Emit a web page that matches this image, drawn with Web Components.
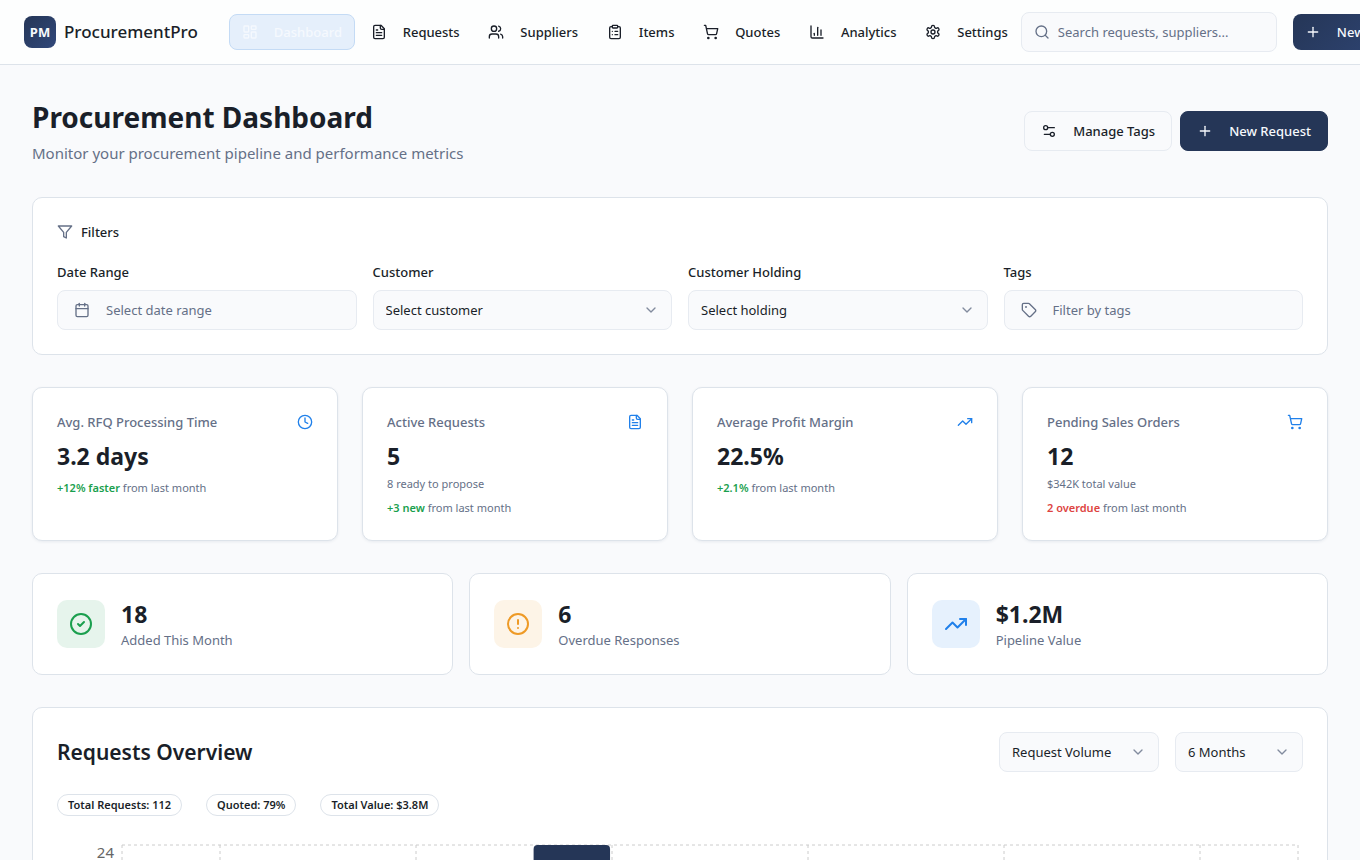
<!DOCTYPE html>
<html lang="en">
<head>
<meta charset="utf-8">
<meta name="viewport" content="width=device-width, initial-scale=1">
<title>ProcurementPro</title>
<style>
  :root {
    --bg: #f9fafc;
    --card: #ffffff;
    --text: #1a1f29;
    --muted: #657087;
    --border: #dde3ea;
    --field: #f9fafc;
    --field-border: #e7ebf1;
    --primary: #253657;
    --primary-light: #31487a;
    --accent: #2080ea;
    --success: #1a9f4e;
    --warning: #ee9a26;
    --danger: #dd4441;
    --radius: 10px;
    --radius-sm: 8px;
  }
  html {
    overflow-x: hidden;
  }
  body {
    margin: 0;
    background: var(--bg);
    color: var(--text);
    font-family: "Noto Sans", "Open Sans", sans-serif;
    font-size: 13px;
    line-height: 20px;
  }
</style>
</head>
<body>
<procurement-app></procurement-app>

<script>
const ICONS = {
  dashboard: '<rect width="7" height="9" x="3" y="3" rx="1"/><rect width="7" height="5" x="14" y="3" rx="1"/><rect width="7" height="9" x="14" y="12" rx="1"/><rect width="7" height="5" x="3" y="16" rx="1"/>',
  file: '<path d="M15 2H6a2 2 0 0 0-2 2v16a2 2 0 0 0 2 2h12a2 2 0 0 0 2-2V7Z"/><path d="M14 2v4a2 2 0 0 0 2 2h4"/><path d="M10 9H8"/><path d="M16 13H8"/><path d="M16 17H8"/>',
  users: '<path d="M16 21v-2a4 4 0 0 0-4-4H6a4 4 0 0 0-4 4v2"/><circle cx="9" cy="7" r="4"/><path d="M22 21v-2a4 4 0 0 0-3-3.87"/><path d="M16 3.13a4 4 0 0 1 0 7.75"/>',
  clipboard: '<rect width="8" height="4" x="8" y="2" rx="1"/><path d="M16 4h2a2 2 0 0 1 2 2v14a2 2 0 0 1-2 2H6a2 2 0 0 1-2-2V6a2 2 0 0 1 2-2h2"/><path d="M12 11h4"/><path d="M12 16h4"/><path d="M8 11h.01"/><path d="M8 16h.01"/>',
  cart: '<circle cx="8" cy="21" r="1"/><circle cx="19" cy="21" r="1"/><path d="M2.05 2.05h2l2.66 12.42a2 2 0 0 0 2 1.58h9.78a2 2 0 0 0 1.95-1.57l1.65-7.43H5.12"/>',
  chart: '<path d="M3 3v16a2 2 0 0 0 2 2h16"/><path d="M18 17V9"/><path d="M13 17V5"/><path d="M8 17v-3"/>',
  settings: '<path d="M12.22 2h-.44a2 2 0 0 0-2 2v.18a2 2 0 0 1-1 1.73l-.43.25a2 2 0 0 1-2 0l-.15-.08a2 2 0 0 0-2.73.73l-.22.38a2 2 0 0 0 .73 2.73l.15.1a2 2 0 0 1 1 1.72v.51a2 2 0 0 1-1 1.74l-.15.09a2 2 0 0 0-.73 2.73l.22.38a2 2 0 0 0 2.73.73l.15-.08a2 2 0 0 1 2 0l.43.25a2 2 0 0 1 1 1.73V20a2 2 0 0 0 2 2h.44a2 2 0 0 0 2-2v-.18a2 2 0 0 1 1-1.73l.43-.25a2 2 0 0 1 2 0l.15.08a2 2 0 0 0 2.73-.73l.22-.39a2 2 0 0 0-.73-2.73l-.15-.08a2 2 0 0 1-1-1.74v-.5a2 2 0 0 1 1-1.74l.15-.09a2 2 0 0 0 .73-2.73l-.22-.38a2 2 0 0 0-2.73-.73l-.15.08a2 2 0 0 1-2 0l-.43-.25a2 2 0 0 1-1-1.73V4a2 2 0 0 0-2-2z"/><circle cx="12" cy="12" r="3"/>',
  search: '<circle cx="11" cy="11" r="8"/><path d="m21 21-4.3-4.3"/>',
  plus: '<path d="M5 12h14"/><path d="M12 5v14"/>',
  sliders: '<path d="M20 7h-9"/><path d="M14 17H5"/><circle cx="17" cy="17" r="3"/><circle cx="7" cy="7" r="3"/>',
  filter: '<polygon points="22 3 2 3 10 12.46 10 19 14 21 14 12.46 22 3"/>',
  calendar: '<path d="M8 2v4"/><path d="M16 2v4"/><rect width="18" height="18" x="3" y="4" rx="2"/><path d="M3 10h18"/>',
  tag: '<path d="M12.586 2.586A2 2 0 0 0 11.172 2H4a2 2 0 0 0-2 2v7.172a2 2 0 0 0 .586 1.414l8.704 8.704a2.426 2.426 0 0 0 3.42 0l6.58-6.58a2.426 2.426 0 0 0 0-3.42z"/><circle cx="7.5" cy="7.5" r=".5" fill="currentColor"/>',
  chevron: '<path d="m6 9 6 6 6-6"/>',
  clock: '<circle cx="12" cy="12" r="10"/><path d="M12 6v6l4 2"/>',
  trend: '<path d="m22 7-8.5 8.5-5-5L2 17"/><path d="M16 7h6v6"/>',
  check: '<circle cx="12" cy="12" r="10"/><path d="m9 12 2 2 4-4"/>',
  alert: '<circle cx="12" cy="12" r="10"/><path d="M12 8v4"/><path d="M12 16h.01"/>'
};

class UiIcon extends HTMLElement {
  connectedCallback() {
    if (this.shadowRoot) return;
    this.attachShadow({ mode: 'open' }).innerHTML = `
      <style>
        :host { display: block; flex: none; width: 16px; height: 16px; }
        svg { display: block; width: 100%; height: 100%; }
      </style>
      <svg viewBox="0 0 24 24" fill="none" stroke="currentColor" stroke-width="2"
        stroke-linecap="round" stroke-linejoin="round" aria-hidden="true">${ICONS[this.getAttribute('name')]}</svg>
    `;
  }
}

class UiButton extends HTMLElement {
  connectedCallback() {
    if (this.shadowRoot) return;
    this.attachShadow({ mode: 'open' }).innerHTML = `
      <style>
        :host { display: block; flex: none; }
        button {
          display: flex;
          align-items: center;
          gap: 16px;
          box-sizing: border-box;
          width: 100%;
          height: 40px;
          padding: 0 16px;
          border: 1px solid var(--field-border);
          border-radius: var(--radius-sm);
          background: var(--field);
          color: var(--text);
          font: inherit;
          font-weight: 500;
          white-space: nowrap;
          cursor: pointer;
        }
        :host([variant="primary"]) button {
          border-color: var(--primary);
          background: var(--primary);
          color: #f6f9fd;
        }
        :host([size="sm"]) button {
          height: 36px;
          padding: 0 12px;
          border: 0;
          background: linear-gradient(135deg, var(--primary), var(--primary-light));
        }
      </style>
      <button type="button"><ui-icon name="${this.getAttribute('icon')}"></ui-icon><slot></slot></button>
    `;
  }
}

// a picker button when an icon is given, a drop-down otherwise
class UiField extends HTMLElement {
  connectedCallback() {
    if (this.shadowRoot) return;
    const label = this.getAttribute('label');
    const text = this.getAttribute('text');
    const icon = this.getAttribute('icon');
    const control = icon
      ? `<button id="control" type="button"><ui-icon name="${icon}"></ui-icon>${text}</button>`
      : `<div class="select">
          <select id="control" aria-label="${label}"><option>${text}</option></select>
          <ui-icon name="chevron"></ui-icon>
        </div>`;
    this.attachShadow({ mode: 'open' }).innerHTML = `
      <style>
        :host { display: block; min-width: 0; }
        label {
          display: block;
          margin-bottom: 8px;
          font-weight: 500;
        }
        .select { display: grid; align-items: center; }
        select, button {
          appearance: none;
          box-sizing: border-box;
          width: 100%;
          height: 40px;
          border: 1px solid var(--field-border);
          border-radius: var(--radius-sm);
          background: var(--field);
          font: inherit;
        }
        select {
          grid-area: 1 / 1;
          padding: 0 32px 0 12px;
          color: var(--text);
        }
        .select ui-icon {
          grid-area: 1 / 1;
          justify-self: end;
          margin-right: 13px;
          color: var(--muted);
          opacity: 0.8;
          pointer-events: none;
        }
        button {
          display: flex;
          align-items: center;
          gap: 16px;
          padding: 0 16px;
          color: var(--muted);
          cursor: pointer;
        }
      </style>
      ${this.hasAttribute('compact') ? '' : `<label for="control">${label}</label>`}
      ${control}
    `;
  }
}

class AppHeader extends HTMLElement {
  connectedCallback() {
    const links = [
      ['dashboard', 'Dashboard'],
      ['file', 'Requests'],
      ['users', 'Suppliers'],
      ['clipboard', 'Items'],
      ['cart', 'Quotes'],
      ['chart', 'Analytics'],
      ['settings', 'Settings']
    ];
    this.attachShadow({ mode: 'open' }).innerHTML = `
      <style>
        :host { display: block; }
        header {
          display: flex;
          align-items: center;
          height: 64px;
          padding: 0 24px;
          border-bottom: 1px solid var(--border);
          background: #fdfefe;
          overflow: hidden;
        }
        .brand {
          display: flex;
          flex: none;
          align-items: center;
          gap: 8px;
          margin-right: 31px;
          color: inherit;
          text-decoration: none;
          font-size: 17px;
          font-weight: 500;
        }
        .logo {
          display: grid;
          place-items: center;
          width: 32px;
          height: 32px;
          border-radius: var(--radius-sm);
          background: linear-gradient(135deg, var(--primary), var(--primary-light));
          color: #f6f9fd;
          font-size: 13px;
          font-weight: 700;
        }
        nav {
          display: flex;
          flex: none;
          justify-content: space-between;
          min-width: 792px;
        }
        nav a {
          display: flex;
          align-items: center;
          gap: 16px;
          box-sizing: border-box;
          height: 36px;
          padding: 0 12px;
          border: 1px solid transparent;
          border-radius: var(--radius-sm);
          color: inherit;
          text-decoration: none;
          font-weight: 500;
        }
        nav a[aria-current] {
          border-color: #c4dbf5;
          background: #e5effb;
          color: #f5f9fe;
        }
        .search {
          display: flex;
          flex: none;
          align-items: center;
          gap: 8px;
          box-sizing: border-box;
          width: 256px;
          height: 40px;
          margin-right: 16px;
          padding: 0 12px;
          border: 1px solid var(--field-border);
          border-radius: var(--radius-sm);
          background: var(--field);
          color: var(--muted);
        }
        input {
          flex: 1;
          min-width: 0;
          padding: 0;
          border: 0;
          outline: 0;
          background: none;
          color: var(--text);
          font: inherit;
        }
        input::placeholder { color: var(--muted); opacity: 1; }
      </style>
      <header>
        <a class="brand" href="#"><span class="logo">PM</span>ProcurementPro</a>
        <nav aria-label="Main">
          ${links.map(([icon, text], i) => `<a href="#${text.toLowerCase()}"${i === 0 ? ' aria-current="page"' : ''}><ui-icon name="${icon}"></ui-icon>${text}</a>`).join('')}
        </nav>
        <label class="search">
          <ui-icon name="search"></ui-icon>
          <input type="search" placeholder="Search requests, suppliers..." aria-label="Search">
        </label>
        <ui-button variant="primary" size="sm" icon="plus">New Request</ui-button>
      </header>
    `;
  }
}

class UiCard extends HTMLElement {
  connectedCallback() {
    if (this.shadowRoot) return;
    this.attachShadow({ mode: 'open' }).innerHTML = `
      <style>
        :host {
          display: block;
          box-sizing: border-box;
          min-width: 0;
          padding: 24px;
          border: 1px solid var(--border);
          border-radius: var(--radius);
          background: var(--card);
        }
        :host([raised]) { box-shadow: 0 1px 3px rgba(30, 50, 90, 0.08); }
      </style>
      <slot></slot>
    `;
  }
}

class FilterPanel extends HTMLElement {
  connectedCallback() {
    this.attachShadow({ mode: 'open' }).innerHTML = `
      <style>
        :host { display: block; }
        h2 {
          display: flex;
          align-items: center;
          gap: 8px;
          margin: 0 0 20px;
          font-size: 13px;
          font-weight: 500;
        }
        h2 ui-icon { color: var(--muted); }
        .fields {
          display: grid;
          grid-template-columns: repeat(auto-fit, minmax(200px, 1fr));
          gap: 16px;
        }
      </style>
      <ui-card>
        <h2><ui-icon name="filter"></ui-icon>Filters</h2>
        <div class="fields">
          <ui-field label="Date Range" text="Select date range" icon="calendar"></ui-field>
          <ui-field label="Customer" text="Select customer"></ui-field>
          <ui-field label="Customer Holding" text="Select holding"></ui-field>
          <ui-field label="Tags" text="Filter by tags" icon="tag"></ui-field>
        </div>
      </ui-card>
    `;
  }
}

class MetricCard extends HTMLElement {
  connectedCallback() {
    const a = name => this.getAttribute(name);
    this.attachShadow({ mode: 'open' }).innerHTML = `
      <style>
        :host { display: grid; min-width: 0; }
        .top {
          display: flex;
          align-items: center;
          justify-content: space-between;
          margin-bottom: 8px;
        }
        h3 {
          margin: 0;
          color: var(--muted);
          font-size: 13px;
          font-weight: 500;
        }
        ui-icon { color: var(--accent); }
        .value {
          font-size: 23px;
          font-weight: 700;
          line-height: 32px;
        }
        p {
          margin: 8px 0 0;
          color: var(--muted);
          font-size: 11px;
          line-height: 16px;
        }
        p.note { margin-top: 4px; }
        b { color: var(--success); font-weight: 600; }
        b.down { color: var(--danger); }
      </style>
      <ui-card raised>
        <div class="top"><h3>${a('label')}</h3><ui-icon name="${a('icon')}"></ui-icon></div>
        <div class="value">${a('value')}</div>
        ${a('note') ? `<p class="note">${a('note')}</p>` : ''}
        <p><b class="${a('trend')}">${a('change')}</b> from last month</p>
      </ui-card>
    `;
  }
}

class StatCard extends HTMLElement {
  connectedCallback() {
    this.attachShadow({ mode: 'open' }).innerHTML = `
      <style>
        :host { display: block; min-width: 0; --tone: var(--accent); }
        :host([tone="success"]) { --tone: var(--success); }
        :host([tone="warning"]) { --tone: var(--warning); }
        .row { display: flex; align-items: center; gap: 16px; }
        .tile {
          padding: 12px;
          border-radius: var(--radius);
          background: color-mix(in srgb, var(--tone) 11%, white);
          color: var(--tone);
        }
        .tile ui-icon { width: 24px; height: 24px; }
        .value {
          font-size: 23px;
          font-weight: 700;
          line-height: 32px;
        }
        .label { color: var(--muted); }
      </style>
      <ui-card>
        <div class="row">
          <div class="tile"><ui-icon name="${this.getAttribute('icon')}"></ui-icon></div>
          <div>
            <div class="value">${this.getAttribute('value')}</div>
            <div class="label">${this.getAttribute('label')}</div>
          </div>
        </div>
      </ui-card>
    `;
  }
}

class BarChart extends HTMLElement {
  connectedCallback() {
    const max = 24;
    const data = [[14, 11], [17, 13], [24, 19], [18, 14], [20, 16], [19, 15]];
    const slot = 100 / data.length;
    // vertical lines run through the middle of each month, plus both edges
    const xs = [0, ...data.map((d, i) => slot * (i + 0.5)), 100];
    const grid = xs.map(x => `<line x1="${x}%" x2="${x}%" y1="0" y2="100%"/>`).join('')
      + [0, 25, 50, 75, 100].map(y => `<line x1="0" x2="100%" y1="${y}%" y2="${y}%"/>`).join('');
    const bar = (x, v, cls) => `<rect class="${cls}" x="${x}%" y="${100 - v / max * 100}%" width="${slot * 0.39}%" height="${v / max * 100}%" rx="4"/>`;
    const bars = data.map(([all, quoted], i) =>
      bar(slot * (i + 0.1), all, 'all') + bar(slot * (i + 0.51), quoted, 'quoted')).join('');
    this.attachShadow({ mode: 'open' }).innerHTML = `
      <style>
        :host {
          display: grid;
          grid-template-columns: 57px 1fr;
          gap: 8px;
          height: 280px;
          padding-right: 5px;
        }
        .axis {
          display: flex;
          flex-direction: column;
          justify-content: space-between;
          color: #666;
          font-size: 15px;
          line-height: 14px;
          text-align: right;
        }
        svg { display: block; width: 100%; height: 100%; overflow: visible; }
        line { stroke: #ccc; stroke-dasharray: 3 3; }
        .all { fill: var(--primary); }
        .quoted { fill: var(--accent); }
      </style>
      <div class="axis"><span>24</span><span>18</span><span>12</span><span>6</span><span>0</span></div>
      <svg role="img" aria-label="Requests by month">${grid}${bars}</svg>
    `;
  }
}

class RequestsOverview extends HTMLElement {
  connectedCallback() {
    const badges = ['Total Requests: 112', 'Quoted: 79%', 'Total Value: $3.8M'];
    this.attachShadow({ mode: 'open' }).innerHTML = `
      <style>
        :host { display: block; }
        .top { display: flex; align-items: center; gap: 16px; }
        h2 {
          flex: 1;
          margin: 0;
          font-size: 21px;
          font-weight: 600;
          line-height: 40px;
        }
        .metric { width: 160px; }
        .range { width: 128px; }
        .badges {
          display: flex;
          flex-wrap: wrap;
          gap: 24px;
          margin: 22px 0 29px;
          padding: 0;
          list-style: none;
        }
        li {
          padding: 2px 10px;
          border: 1px solid var(--border);
          border-radius: 11px;
          font-size: 11px;
          font-weight: 600;
          line-height: 16px;
        }
      </style>
      <ui-card>
        <div class="top">
          <h2>Requests Overview</h2>
          <ui-field compact class="metric" label="Metric" text="Request Volume"></ui-field>
          <ui-field compact class="range" label="Period" text="6 Months"></ui-field>
        </div>
        <ul class="badges">${badges.map(b => `<li>${b}</li>`).join('')}</ul>
        <bar-chart></bar-chart>
      </ui-card>
    `;
  }
}

class ProcurementApp extends HTMLElement {
  connectedCallback() {
    this.attachShadow({ mode: 'open' }).innerHTML = `
      <style>
        :host { display: block; }
        main {
          display: flex;
          flex-direction: column;
          gap: 32px;
          padding: 32px;
        }
        .title {
          display: flex;
          flex-wrap: wrap;
          align-items: center;
          justify-content: space-between;
          gap: 16px;
        }
        h1 {
          margin: 0 0 4px;
          font-size: 28px;
          font-weight: 700;
          line-height: 40px;
        }
        p {
          margin: 0;
          color: var(--muted);
          font-size: 15px;
          line-height: 24px;
        }
        .actions { display: flex; gap: 8px; }
        .metrics {
          display: grid;
          grid-template-columns: repeat(auto-fit, minmax(240px, 1fr));
          gap: 24px;
        }
        .stats {
          display: grid;
          grid-template-columns: repeat(auto-fit, minmax(300px, 1fr));
          gap: 16px;
        }
      </style>
      <app-header></app-header>
      <main>
        <div class="title">
          <div>
            <h1>Procurement Dashboard</h1>
            <p>Monitor your procurement pipeline and performance metrics</p>
          </div>
          <div class="actions">
            <ui-button icon="sliders">Manage Tags</ui-button>
            <ui-button variant="primary" icon="plus">New Request</ui-button>
          </div>
        </div>
        <filter-panel></filter-panel>
        <section class="metrics">
          <metric-card label="Avg. RFQ Processing Time" icon="clock" value="3.2 days" change="+12% faster" trend="up"></metric-card>
          <metric-card label="Active Requests" icon="file" value="5" note="8 ready to propose" change="+3 new" trend="up"></metric-card>
          <metric-card label="Average Profit Margin" icon="trend" value="22.5%" change="+2.1%" trend="up"></metric-card>
          <metric-card label="Pending Sales Orders" icon="cart" value="12" note="$342K total value" change="2 overdue" trend="down"></metric-card>
        </section>
        <section class="stats">
          <stat-card tone="success" icon="check" value="18" label="Added This Month"></stat-card>
          <stat-card tone="warning" icon="alert" value="6" label="Overdue Responses"></stat-card>
          <stat-card icon="trend" value="$1.2M" label="Pipeline Value"></stat-card>
        </section>
        <requests-overview></requests-overview>
      </main>
    `;
  }
}

customElements.define('ui-icon', UiIcon);
customElements.define('ui-button', UiButton);
customElements.define('ui-field', UiField);
customElements.define('ui-card', UiCard);
customElements.define('app-header', AppHeader);
customElements.define('filter-panel', FilterPanel);
customElements.define('metric-card', MetricCard);
customElements.define('stat-card', StatCard);
customElements.define('bar-chart', BarChart);
customElements.define('requests-overview', RequestsOverview);
customElements.define('procurement-app', ProcurementApp);
</script>
</body>
</html>
